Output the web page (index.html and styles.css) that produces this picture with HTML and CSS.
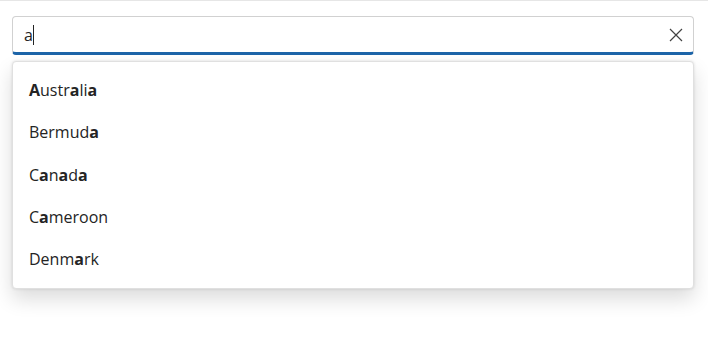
FILE: index.html
```html
<!DOCTYPE html>
<html lang="en">
<head>
    <meta charset="UTF-8">
    <meta name="viewport" content="width=device-width, initial-scale=1.0">
    <title>Country search</title>
    <link rel="stylesheet" href="styles.css">
</head>
<body>
    <div class="search">
        <div class="search-box">
            <span class="search-value">a</span><span class="caret"></span>
            <button class="clear-btn" aria-label="Clear">
                <svg width="14" height="14" viewBox="0 0 14 14">
                    <path d="M1 1 L13 13 M13 1 L1 13" stroke="#424242" stroke-width="1.2" fill="none"/>
                </svg>
            </button>
        </div>

        <ul class="suggestions">
            <li><b>A</b>ustr<b>a</b>li<b>a</b></li>
            <li>Bermud<b>a</b></li>
            <li>C<b>a</b>n<b>a</b>d<b>a</b></li>
            <li>C<b>a</b>meroon</li>
            <li>Denm<b>a</b>rk</li>
        </ul>
    </div>
</body>
</html>
```

FILE: styles.css
```css
body {
    margin: 0;
    padding: 0;
    font-family: 'Segoe UI', 'Open Sans', sans-serif;
    background-color: white;
    color: #242424;
    border-top: 1px solid #e6e6e6;
}

.search {
    padding: 15px 14px 40px 12px;
}

.search-box {
    height: 35px;
    display: flex;
    align-items: center;
    padding: 0 10px 0 11px;
    border: 1px solid #d1d1d1;
    border-bottom: 3px solid #1c64a8;
    border-radius: 4px;
    font-size: 16px;
}

.search-value {
    line-height: 20px;
}

.caret {
    width: 1px;
    height: 20px;
    background: #242424;
}

.clear-btn {
    margin-left: auto;
    background: none;
    border: none;
    padding: 0;
    width: 14px;
    height: 14px;
    display: flex;
    cursor: pointer;
}

.suggestions {
    list-style: none;
    margin: 6px 0 0;
    padding: 7px 0 8px;
    background: white;
    border: 1px solid #e0e0e0;
    border-radius: 4px;
    box-shadow: 0 10px 20px rgba(0,0,0,0.14), 0 0 3px rgba(0,0,0,0.12);
}

.suggestions li {
    height: 42.3px;
    display: flex;
    align-items: center;
    padding-left: 16px;
    font-size: 16px;
}

.suggestions b {
    font-weight: 700;
}
```
